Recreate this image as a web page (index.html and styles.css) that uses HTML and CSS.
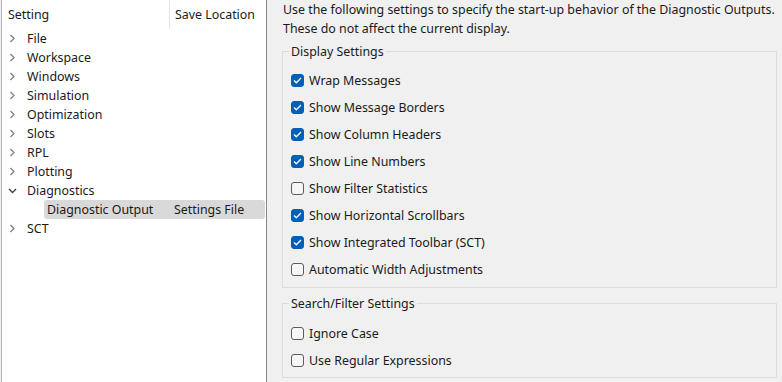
FILE: index.html
```html
<!DOCTYPE html>
<html lang="en">
<head>
  <meta charset="UTF-8">
  <title>Diagnostic Output Settings</title>
  <link rel="stylesheet" href="styles.css">
</head>
<body>
<div class="window">
  <aside class="tree">
    <div class="tree-head">
      <div class="col-setting">Setting</div>
      <div class="col-location">Save Location</div>
    </div>
    <div class="tree-row"><svg class="chev" width="6" height="9" viewBox="0 0 6 9"><polyline points="1,1 4.5,4.5 1,8"/></svg><span>File</span></div>
    <div class="tree-row"><svg class="chev" width="6" height="9" viewBox="0 0 6 9"><polyline points="1,1 4.5,4.5 1,8"/></svg><span>Workspace</span></div>
    <div class="tree-row"><svg class="chev" width="6" height="9" viewBox="0 0 6 9"><polyline points="1,1 4.5,4.5 1,8"/></svg><span>Windows</span></div>
    <div class="tree-row"><svg class="chev" width="6" height="9" viewBox="0 0 6 9"><polyline points="1,1 4.5,4.5 1,8"/></svg><span>Simulation</span></div>
    <div class="tree-row"><svg class="chev" width="6" height="9" viewBox="0 0 6 9"><polyline points="1,1 4.5,4.5 1,8"/></svg><span>Optimization</span></div>
    <div class="tree-row"><svg class="chev" width="6" height="9" viewBox="0 0 6 9"><polyline points="1,1 4.5,4.5 1,8"/></svg><span>Slots</span></div>
    <div class="tree-row"><svg class="chev" width="6" height="9" viewBox="0 0 6 9"><polyline points="1,1 4.5,4.5 1,8"/></svg><span>RPL</span></div>
    <div class="tree-row"><svg class="chev" width="6" height="9" viewBox="0 0 6 9"><polyline points="1,1 4.5,4.5 1,8"/></svg><span>Plotting</span></div>
    <div class="tree-row"><svg class="chev open" width="9" height="6" viewBox="0 0 9 6"><polyline points="1,1 4.5,4.5 8,1"/></svg><span>Diagnostics</span></div>
    <div class="tree-row child">
      <div class="selected">
        <span class="child-name">Diagnostic Output</span>
        <span>Settings File</span>
      </div>
    </div>
    <div class="tree-row"><svg class="chev" width="6" height="9" viewBox="0 0 6 9"><polyline points="1,1 4.5,4.5 1,8"/></svg><span>SCT</span></div>
  </aside>

  <main class="panel">
    <p class="intro">Use the following settings to specify the start-up behavior of the Diagnostic Outputs.<br>These do not affect the current display.</p>

    <fieldset class="group">
      <legend>Display Settings</legend>
      <label class="option"><span class="box checked"><svg width="9" height="7" viewBox="0 0 9 7"><polyline points="1,3.5 3.3,5.8 8,1"/></svg></span>Wrap Messages</label>
      <label class="option"><span class="box checked"><svg width="9" height="7" viewBox="0 0 9 7"><polyline points="1,3.5 3.3,5.8 8,1"/></svg></span>Show Message Borders</label>
      <label class="option"><span class="box checked"><svg width="9" height="7" viewBox="0 0 9 7"><polyline points="1,3.5 3.3,5.8 8,1"/></svg></span>Show Column Headers</label>
      <label class="option"><span class="box checked"><svg width="9" height="7" viewBox="0 0 9 7"><polyline points="1,3.5 3.3,5.8 8,1"/></svg></span>Show Line Numbers</label>
      <label class="option"><span class="box"></span>Show Filter Statistics</label>
      <label class="option"><span class="box checked"><svg width="9" height="7" viewBox="0 0 9 7"><polyline points="1,3.5 3.3,5.8 8,1"/></svg></span>Show Horizontal Scrollbars</label>
      <label class="option"><span class="box checked"><svg width="9" height="7" viewBox="0 0 9 7"><polyline points="1,3.5 3.3,5.8 8,1"/></svg></span>Show Integrated Toolbar (SCT)</label>
      <label class="option"><span class="box"></span>Automatic Width Adjustments</label>
    </fieldset>

    <fieldset class="group search">
      <legend>Search/Filter Settings</legend>
      <label class="option"><span class="box"></span>Ignore Case</label>
      <label class="option"><span class="box"></span>Use Regular Expressions</label>
    </fieldset>
  </main>
</div>
</body>
</html>
```

FILE: styles.css
```css
* {
  box-sizing: border-box;
}
body {
  margin: 0;
  background-color: #f0f0f0;
  color: #1a1a1a;
  font-family: 'Noto Sans', 'Open Sans', sans-serif;
  font-size: 12.4px;
}
.window {
  display: flex;
  height: 382px;
  overflow: hidden;
}

/* 左侧树 */
.tree {
  width: 266px;
  flex-shrink: 0;
  margin-left: 1px;
  background-color: #ffffff;
  border-left: 1px solid #b4b4b4;
  border-right: 1px solid #828790;
}
.tree-head {
  display: flex;
  height: 29px;
  align-items: center;
}
.col-setting {
  width: 168px;
  height: 29px;
  line-height: 29px;
  padding-left: 6px;
  border-right: 1px solid #e5e5e5;
}
.col-location {
  padding-left: 5px;
}
.tree-row {
  display: flex;
  align-items: center;
  height: 19px;
  padding-left: 6px;
}
.chev {
  width: 9px;
  margin-right: 10px;
  fill: none;
  stroke: #808080;
  stroke-width: 1.3;
}
.chev.open {
  stroke: #3c3c3c;
}
.tree-row.child {
  padding-left: 42px;
  padding-right: 1px;
}
.selected {
  display: flex;
  align-items: center;
  flex: 1;
  height: 19px;
  padding-left: 3px;
  background-color: #d9d9d9;
  border-radius: 3px;
}
.child-name {
  width: 127px;
}

/* 右侧面板 */
.panel {
  flex: 1;
  padding: 0 5px 0 15px;
}
.intro {
  margin: 0;
  padding-left: 1px;
  line-height: 19px;
}
.group {
  margin: 5px 0 0;
  padding: 7px 8px 4px;
  border: 1px solid #dcdcdc;
}
.group.search {
  margin-top: 7px;
  padding-top: 8px;
  padding-bottom: 3px;
}
.group legend {
  margin-left: -2px;
  padding: 0 2px;
  line-height: 17px;
}
.option {
  display: flex;
  align-items: center;
  height: 27px;
}
.box {
  display: flex;
  align-items: center;
  justify-content: center;
  width: 13px;
  height: 13px;
  margin-right: 5px;
  border: 1px solid #5c5c5c;
  border-radius: 3px;
  background-color: #f6f6f6;
}
.box.checked {
  border-color: #005fb8;
  background-color: #005fb8;
}
.box svg {
  fill: none;
  stroke: #ffffff;
  stroke-width: 1.3;
}
```
